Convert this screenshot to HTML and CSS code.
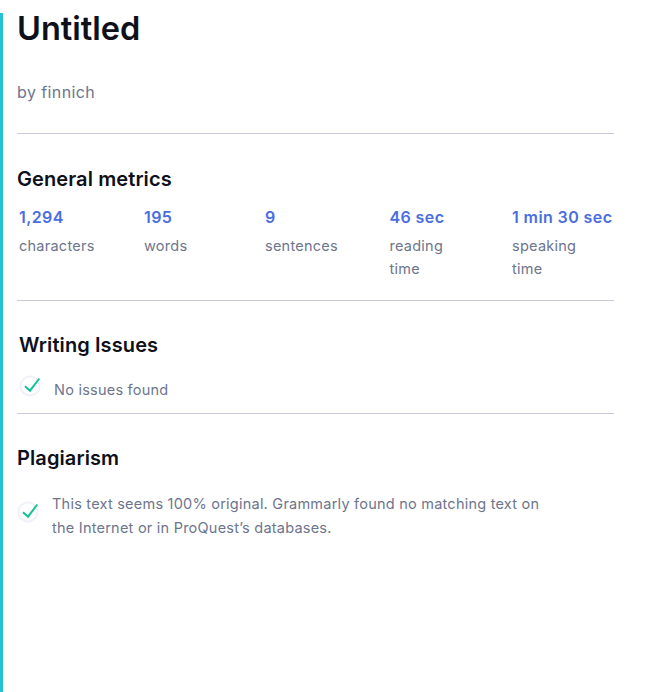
FILE: index.html
```html
<!DOCTYPE html>
<html lang="en">
<head>
  <meta charset="UTF-8" />
  <title>Untitled</title>
  <link rel="stylesheet" href="styles.css">
</head>
<body>
  <div class="report">
    <header class="doc-head">
      <h1>Untitled</h1>
      <p class="author">by finnich</p>
    </header>

    <section class="metrics-section">
      <h2>General metrics</h2>
      <div class="metrics">
        <div class="metric"><strong>1,294</strong><span>characters</span></div>
        <div class="metric"><strong>195</strong><span>words</span></div>
        <div class="metric"><strong>9</strong><span>sentences</span></div>
        <div class="metric"><strong>46 sec</strong><span>reading<br>time</span></div>
        <div class="metric"><strong>1 min 30 sec</strong><span>speaking<br>time</span></div>
      </div>
    </section>

    <section class="issues-section">
      <h2>Writing Issues</h2>
      <div class="check-row">
        <svg class="check" width="22" height="22" viewBox="0 0 22 22">
          <circle cx="11" cy="11" r="9.5" fill="#fff" stroke="#f0f0f8" stroke-width="2"/>
          <path d="M6 11.3l5 4.4L20.3 3.5" fill="none" stroke="#15c39a" stroke-width="2"/>
        </svg>
        <p>No issues found</p>
      </div>
    </section>

    <section class="plagiarism-section">
      <h2>Plagiarism</h2>
      <div class="check-row">
        <svg class="check" width="22" height="22" viewBox="0 0 22 22">
          <circle cx="11" cy="11" r="9.5" fill="#fff" stroke="#f0f0f8" stroke-width="2"/>
          <path d="M6 11.3l5 4.4L20.3 3.5" fill="none" stroke="#15c39a" stroke-width="2"/>
        </svg>
        <p>This text seems 100% original. Grammarly found no matching text on the Internet or in ProQuest’s databases.</p>
      </div>
    </section>
  </div>
</body>
</html>
```

FILE: styles.css
```css
:root {
  --ink: #0e101a;
  --muted: #6d758d;
  --blue: #4a6ee0;
  --rule: #c9cbd8;
  --teal: #25c3cf;
}

body {
  background: #fff;
  color: var(--ink);
  font-family: Inter, "Noto Sans", sans-serif;
  margin: 0;
}

.report {
  width: 597px;
  height: 679px;
  margin-top: 13px;
  padding-left: 14px;
  border-left: 3px solid var(--teal);
}

h1 {
  font-size: 32.5px;
  font-weight: 600;
  line-height: 32px;
  margin: 0;
}

h2 {
  font-size: 20px;
  font-weight: 600;
  line-height: 24px;
  letter-spacing: 0.1px;
  margin: 0;
}

.doc-head {
  height: 120px;
  border-bottom: 1px solid var(--rule);
}

.author {
  color: var(--muted);
  font-size: 16px;
  line-height: 20px;
  letter-spacing: 0.4px;
  margin: 37px 0 0;
}

.metrics-section {
  height: 167px;
  padding-top: 33px;
  box-sizing: border-box;
  border-bottom: 1px solid var(--rule);
}

.metrics {
  display: grid;
  grid-template-columns: 125px 121px 124.5px 122.5px 1fr;
  margin-top: 16px;
  padding-left: 2px;
}

.metric strong {
  display: block;
  color: var(--blue);
  font-size: 16px;
  font-weight: 600;
  line-height: 20px;
  letter-spacing: 0.4px;
  white-space: nowrap;
}

.metric span {
  display: block;
  color: var(--muted);
  font-size: 14.5px;
  line-height: 23px;
  letter-spacing: 0.25px;
  margin-top: 7px;
}

.issues-section {
  height: 113px;
  padding: 32px 0 0 2px;
  box-sizing: border-box;
  border-bottom: 1px solid var(--rule);
}

.issues-section .check-row {
  margin-top: 18px;
}

.issues-section .check-row p {
  margin-top: 3px;
}

.plagiarism-section {
  padding-top: 32px;
}

.plagiarism-section .check-row {
  margin-top: 22px;
}

.plagiarism-section .check {
  margin-top: 9px;
}

.check-row {
  display: flex;
  align-items: flex-start;
  gap: 13px;
  color: var(--muted);
  font-size: 14.5px;
  line-height: 24px;
  letter-spacing: 0.23px;
}

.check-row p {
  margin: 0;
  max-width: 490px;
}

.check {
  flex: none;
  overflow: visible;
}
```
